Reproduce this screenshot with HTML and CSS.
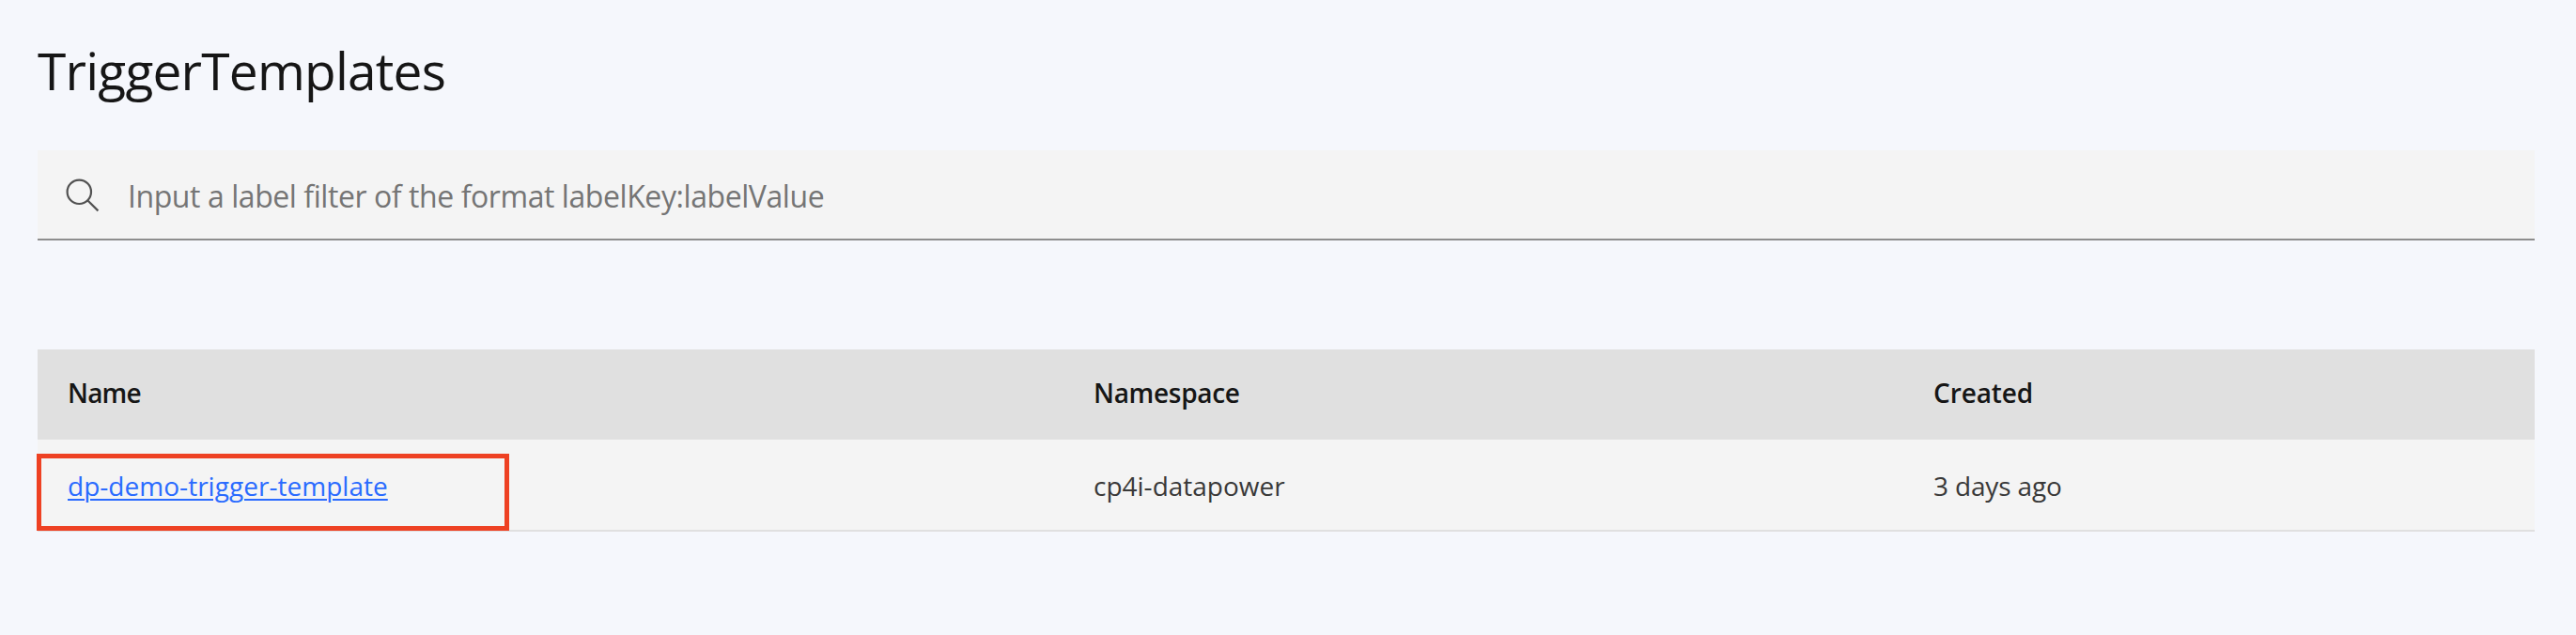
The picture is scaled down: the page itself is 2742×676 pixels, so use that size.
FILE: index.html
```html
<!DOCTYPE html>
<html lang="en">
<head>
<meta charset="utf-8">
<title>TriggerTemplates</title>
<link rel="stylesheet" href="styles.css">
</head>
<body>
<main class="page">
  <h1 class="title">TriggerTemplates</h1>
  <div class="search">
    <svg class="search-icon" viewBox="0 0 32 32" aria-hidden="true"><circle cx="14.3" cy="14.3" r="12.7"/><path d="M23.2 23.2 34.4 34.4"/></svg>
    <span class="placeholder">Input a label filter of the format labelKey:labelValue</span>
  </div>
  <section class="table">
    <div class="row head">
      <span class="col-name">Name</span>
      <span class="col-namespace">Namespace</span>
      <span class="col-created">Created</span>
    </div>
    <div class="row body">
      <a class="link">dp-demo-trigger-template</a>
      <span>cp4i-datapower</span>
      <span class="age">3 days ago</span>
      <div class="highlight"></div>
    </div>
  </section>
</main>
</body>
</html>
```
FILE: styles.css
```css
* { box-sizing: border-box; }
body {
  margin: 0;
  background: #f5f7fc;
  color: #161616;
  font-family: "Open Sans", sans-serif;
}
.page { padding: 35px 44px 0 40px; }
.title {
  margin: 0;
  height: 125px;
  font-size: 55px;
  font-weight: 400;
  line-height: 80px;
  letter-spacing: -0.78px;
}
.search {
  display: flex;
  align-items: center;
  height: 96px;
  padding-left: 30px;
  background: #f4f4f4;
  border-bottom: 2px solid #8d8d8d;
}
.search-icon {
  width: 32px;
  height: 32px;
  margin-bottom: 2px;
  overflow: visible;
  fill: none;
  stroke: #525252;
  stroke-width: 2.2;
}
.placeholder {
  margin-left: 34px;
  padding-top: 2px;
  font-size: 32px;
  letter-spacing: -0.43px;
  color: #757575;
  white-space: nowrap;
}
.table { margin-top: 116px; font-size: 28px; }
.row {
  display: grid;
  grid-template-columns: 1092px 894px 1fr;
  align-items: center;
  height: 96px;
  padding-left: 32px;
}
.head {
  padding-bottom: 4px;
  background: #e0e0e0;
  font-weight: 600;
}
.col-name { letter-spacing: -0.8px; }
.col-namespace { letter-spacing: -0.3px; }
.col-created { letter-spacing: -0.1px; }
.body {
  position: relative;
  height: 98px;
  padding-top: 2px;
  background: #f4f4f4;
  border-bottom: 2px solid #e0e0e0;
  color: #393939;
}
.link {
  justify-self: start;
  color: #2a6bff;
  letter-spacing: 0.03px;
  text-decoration: underline;
  text-decoration-thickness: 2px;
  text-underline-offset: 3px;
}
.age { letter-spacing: -0.15px; }
.highlight {
  position: absolute;
  left: -1px;
  top: 15px;
  width: 503px;
  height: 82px;
  border: 5px solid #ee4123;
}
```
